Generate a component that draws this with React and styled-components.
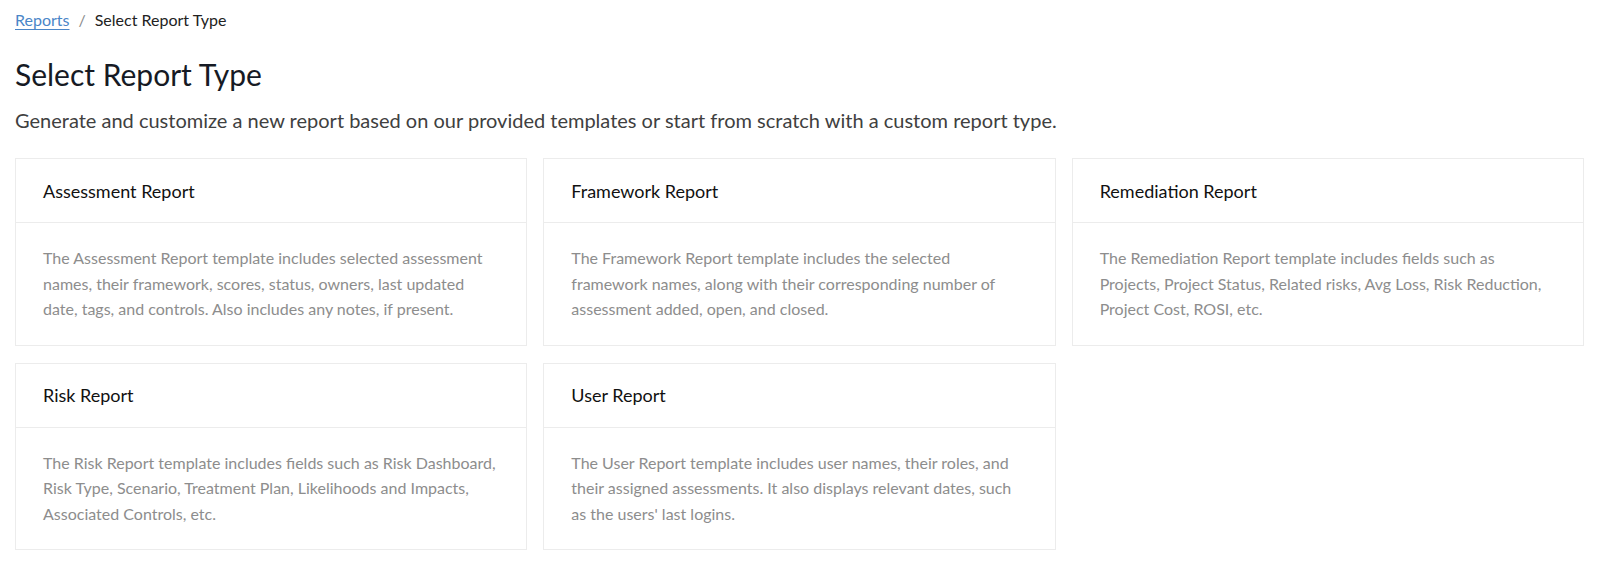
import React from 'react';
import styled, { createGlobalStyle } from 'styled-components';

const GlobalStyle = createGlobalStyle`
  html, body {
    margin: 0;
    padding: 0;
    background: #ffffff;
  }
  body {
    font-family: Lato, "Noto Sans", "Liberation Sans", sans-serif;
    -webkit-font-smoothing: antialiased;
  }
  * {
    box-sizing: border-box;
  }
`;

const Page = styled.div`
  padding: 8px 16px 16px 15px;
`;

const Breadcrumbs = styled.nav`
  display: flex;
  align-items: center;
  gap: 9px;
  font-size: 16px;
  line-height: 24px;
  color: #222;
`;

const CrumbLink = styled.a`
  color: #4a86c8;
  text-decoration: underline;
  text-underline-offset: 3px;
  text-decoration-thickness: 1px;
  cursor: pointer;
`;

const Separator = styled.span`
  color: #8a8a8a;
`;

const Title = styled.h1`
  margin: 22px 0 0;
  font-size: 30px;
  line-height: 40px;
  font-weight: 400;
  color: #161a24;
`;

const Subtitle = styled.p`
  margin: 12px 0 0;
  font-size: 20px;
  line-height: 28px;
  color: #404040;
`;

const Grid = styled.div`
  margin-top: 24px;
  display: grid;
  grid-template-columns: repeat(3, 1fr);
  gap: 17px 16px;
`;

const Card = styled.div`
  border: 1px solid #ececec;
  background: #fff;
  cursor: pointer;
`;

const CardHeader = styled.div`
  height: 64px;
  display: flex;
  align-items: center;
  padding: 0 28px 0 27px;
  border-bottom: 1px solid #ececec;
  font-size: 18px;
  color: #111;
`;

const CardBody = styled.div`
  padding: 22px 28px 23px 27px;
  font-size: 16px;
  line-height: 25.5px;
  color: #8d8d8d;
`;

const reports = [
  {
    title: 'Assessment Report',
    text: 'The Assessment Report template includes selected assessment names, their framework, scores, status, owners, last updated date, tags, and controls. Also includes any notes, if present.',
  },
  {
    title: 'Framework Report',
    text: 'The Framework Report template includes the selected framework names, along with their corresponding number of assessment added, open, and closed.',
  },
  {
    title: 'Remediation Report',
    text: 'The Remediation Report template includes fields such as Projects, Project Status, Related risks, Avg Loss, Risk Reduction, Project Cost, ROSI, etc.',
  },
  {
    title: 'Risk Report',
    text: 'The Risk Report template includes fields such as Risk Dashboard, Risk Type, Scenario, Treatment Plan, Likelihoods and Impacts, Associated Controls, etc.',
  },
  {
    title: 'User Report',
    text: "The User Report template includes user names, their roles, and their assigned assessments. It also displays relevant dates, such as the users' last logins.",
  },
];

const App = () => {
  return (
    <Page>
      <GlobalStyle />
      <Breadcrumbs>
        <CrumbLink>Reports</CrumbLink>
        <Separator>/</Separator>
        <span>Select Report Type</span>
      </Breadcrumbs>
      <Title>Select Report Type</Title>
      <Subtitle>
        Generate and customize a new report based on our provided templates or start from scratch with a custom report type.
      </Subtitle>
      <Grid>
        {reports.map((r) => (
          <Card key={r.title}>
            <CardHeader>{r.title}</CardHeader>
            <CardBody>{r.text}</CardBody>
          </Card>
        ))}
      </Grid>
    </Page>
  );
};

export default App;
